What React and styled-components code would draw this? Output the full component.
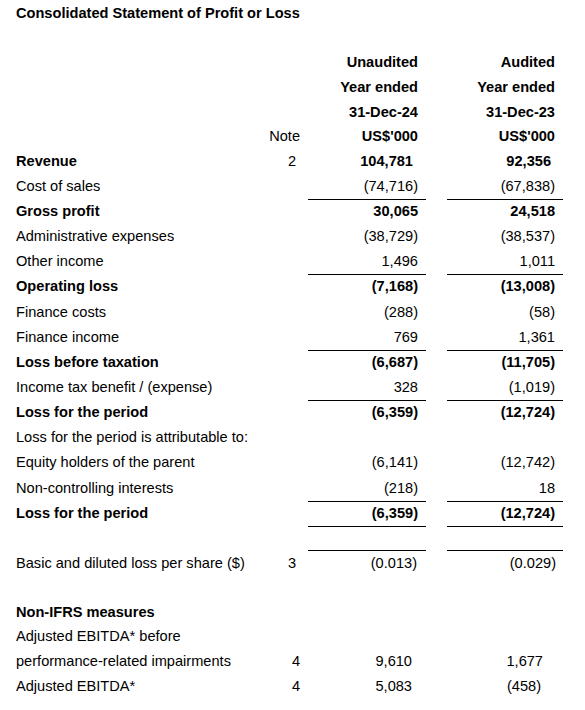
import styled, { createGlobalStyle } from "styled-components";

const headerRows = [
  { note: "", values: ["Unaudited", "Audited"] },
  { note: "", values: ["Year ended", "Year ended"] },
  { note: "", values: ["31-Dec-24", "31-Dec-23"] },
  { note: "Note", values: ["US$'000", "US$'000"] },
];

const bodyRows = [
  { label: "Revenue", note: "2", notePad: 4, values: ["104,781", "92,356"], pads: [13, 12], bold: true },
  { label: "Cost of sales", values: ["(74,716)", "(67,838)"], line: true },
  { label: "Gross profit", values: ["30,065", "24,518"], bold: true },
  { label: "Administrative expenses", values: ["(38,729)", "(38,537)"] },
  { label: "Other income", values: ["1,496", "1,011"], line: true },
  { label: "Operating loss", values: ["(7,168)", "(13,008)"], bold: true },
  { label: "Finance costs", values: ["(288)", "(58)"] },
  { label: "Finance income", values: ["769", "1,361"], line: true },
  { label: "Loss before taxation", values: ["(6,687)", "(11,705)"], bold: true },
  { label: "Income tax benefit / (expense)", values: ["328", "(1,019)"], line: true },
  { label: "Loss for the period", values: ["(6,359)", "(12,724)"], bold: true },
  { label: "Loss for the period is attributable to:", values: ["", ""] },
  { label: "Equity holders of the parent", values: ["(6,141)", "(12,742)"] },
  { label: "Non-controlling interests", values: ["(218)", "18"], line: true },
  { label: "Loss for the period", values: ["(6,359)", "(12,724)"], bold: true, line: true },
  { label: "", values: ["", ""], line: true, h: 25 },
  { label: "Basic and diluted loss per share ($)", note: "3", notePad: 4, values: ["(0.013)", "(0.029)"], pads: [9, 7], h: 25 },
  { label: "", values: ["", ""], h: 24 },
  { label: "Non-IFRS measures", values: ["", ""], bold: true, h: 24 },
  { label: "Adjusted EBITDA* before", values: ["", ""], h: 25 },
  { label: "performance-related impairments", note: "4", values: ["9,610", "1,677"], pads: [14, 20], h: 25 },
  { label: "Adjusted EBITDA*", note: "4", values: ["5,083", "(458)"], pads: [14, 22], h: 25 },
];

function App() {
  return (
    <Page>
      <GlobalStyle />
      <Title>Consolidated Statement of Profit or Loss</Title>
      <Spacer />
      {headerRows.map((r, i) => (
        <Row key={"h" + i} $h={24.6}>
          <Label />
          <Note>{r.note}</Note>
          {r.values.map((v, j) => (
            <Amount key={j} $bold>
              {v}
            </Amount>
          ))}
        </Row>
      ))}
      {bodyRows.map((r, i) => (
        <Row key={i} $h={r.h || 25.15}>
          <Label $bold={r.bold}>{r.label}</Label>
          <Note $pad={r.notePad}>{r.note}</Note>
          {r.values.map((v, j) => (
            <Amount key={j} $bold={r.bold} $line={r.line} $pad={r.pads ? r.pads[j] : 8}>
              {v}
            </Amount>
          ))}
        </Row>
      ))}
    </Page>
  );
}

const GlobalStyle = createGlobalStyle`
  * {
    box-sizing: border-box;
  }
  body {
    margin: 0;
    background: #fff;
    color: #000;
    font-family: "Liberation Sans", Arial, sans-serif;
    font-size: 14.6px;
  }
`;

const Page = styled.div`
  padding: 1px 0 0 16px;
  width: 585px;
`;

const Title = styled.div`
  height: 24.7px;
  line-height: 24.7px;
  font-weight: bold;
  white-space: nowrap;
`;

const Spacer = styled.div`
  height: 24.7px;
`;

const Row = styled.div`
  display: grid;
  grid-template-columns: 246px 38px 126px 137px;
  height: ${(p) => p.$h}px;
  line-height: ${(p) => p.$h}px;

  & > :nth-child(3) {
    margin-left: 8px;
  }
  & > :nth-child(4) {
    margin-left: 21px;
  }
`;

const Label = styled.div`
  font-weight: ${(p) => (p.$bold ? "bold" : "normal")};
  white-space: nowrap;
`;

const Note = styled.div`
  text-align: right;
  padding-right: ${(p) => p.$pad || 0}px;
`;

const Amount = styled.div`
  text-align: right;
  padding-right: ${(p) => (p.$pad === undefined ? 8 : p.$pad)}px;
  font-weight: ${(p) => (p.$bold ? "bold" : "normal")};
  border-bottom: ${(p) => (p.$line ? "1px solid #000" : "none")};
  white-space: nowrap;
`;

export default App;
